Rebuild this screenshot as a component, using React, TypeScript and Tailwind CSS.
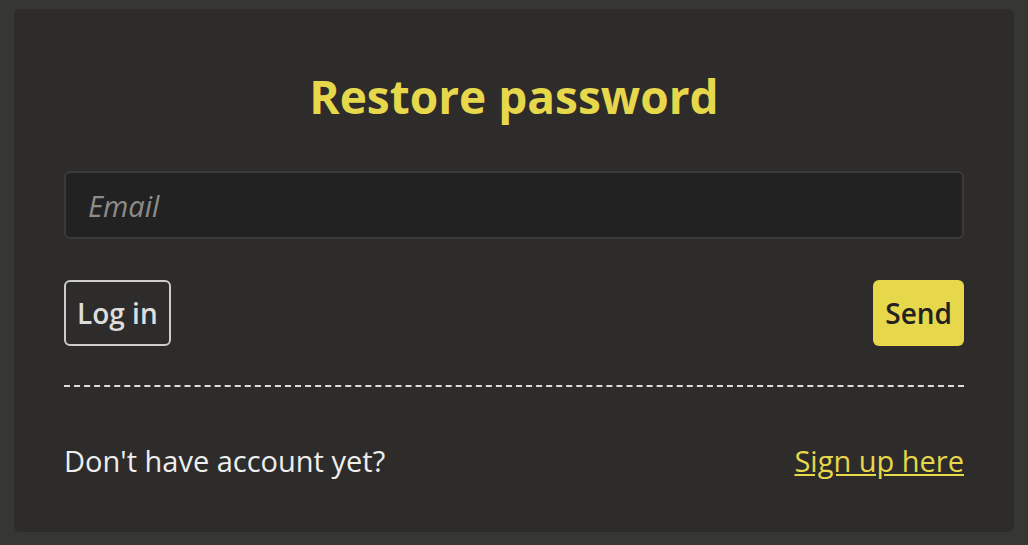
export default function App() {
    return (
        <div
            className="min-h-[545px] w-full bg-[#363632] px-[14px] pt-[9px] pb-[13px]"
            style={{ fontFamily: '"Open Sans", "Noto Sans", sans-serif' }}
        >
            <div className="rounded-md bg-[#2d2c2a] px-[50px] pt-[57px] pb-[51px]">
                <h1 className="text-center text-[46px] leading-[60px] font-bold text-[#e6d84a]">
                    Restore password
                </h1>
                <input
                    type="email"
                    placeholder="Email"
                    className="mt-[45px] block h-[68px] w-full rounded-md border-2 border-[#3a3a3a] bg-[#222222] px-[22px] text-[29px] text-[#dddddd] italic outline-none placeholder:text-[#8c8c8c]"
                />
                <div className="mt-[41px] flex items-center justify-between">
                    <button className="h-[66px] rounded-md border-2 border-[#cccccc] px-[11px] text-[28px] font-semibold text-[#dddddd]">
                        Log in
                    </button>
                    <button className="h-[66px] rounded-md bg-[#e6d84a] px-[12px] text-[28px] font-semibold text-[#222222]">
                        Send
                    </button>
                </div>
                <div className="mt-[39px] border-t-2 border-dashed border-[#dddddd]" />
                <div className="mt-[54px] flex items-center justify-between text-[29px] leading-[40px]">
                    <span className="text-[#eeeeee]">Don't have account yet?</span>
                    <a href="#" className="text-[#e6d84a] underline">
                        Sign up here
                    </a>
                </div>
            </div>
        </div>
    )
}
